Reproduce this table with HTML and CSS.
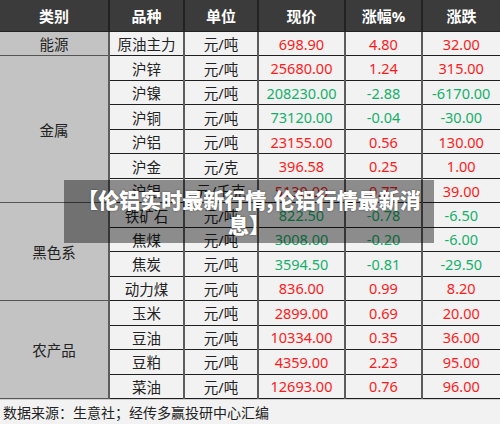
FILE: index.html
```html
<!DOCTYPE html>
<html lang="zh-CN">
<head>
    <meta charset="UTF-8">
    <title>伦铝实时最新行情</title>
    <link rel="stylesheet" href="styles.css">
</head>
<body>
    <div class="sheet">
        <table class="quotes">
            <colgroup>
                <col class="c-cat"><col class="c-name"><col class="c-unit">
                <col class="c-price"><col class="c-pct"><col class="c-chg">
            </colgroup>
            <thead>
                <tr>
                    <th>类别</th>
                    <th>品种</th>
                    <th>单位</th>
                    <th>现价</th>
                    <th>涨幅%</th>
                    <th>涨跌</th>
                </tr>
            </thead>
            <tbody>
                <tr>
                    <td class="cat">能源</td>
                    <td>原油主力</td><td>元/吨</td>
                    <td class="up">698.90</td><td class="up">4.80</td><td class="up">32.00</td>
                </tr>
                <tr>
                    <td class="cat" rowspan="6">金属</td>
                    <td>沪锌</td><td>元/吨</td>
                    <td class="up">25680.00</td><td class="up">1.24</td><td class="up">315.00</td>
                </tr>
                <tr>
                    <td>沪镍</td><td>元/吨</td>
                    <td class="down">208230.00</td><td class="down">-2.88</td><td class="down">-6170.00</td>
                </tr>
                <tr>
                    <td>沪铜</td><td>元/吨</td>
                    <td class="down">73120.00</td><td class="down">-0.04</td><td class="down">-30.00</td>
                </tr>
                <tr>
                    <td>沪铝</td><td>元/吨</td>
                    <td class="up">23155.00</td><td class="up">0.56</td><td class="up">130.00</td>
                </tr>
                <tr>
                    <td>沪金</td><td>元/克</td>
                    <td class="up">396.58</td><td class="up">0.25</td><td class="up">1.00</td>
                </tr>
                <tr>
                    <td>沪银</td><td>元/千克</td>
                    <td class="up">5130.00</td><td class="up">0.77</td><td class="up">39.00</td>
                </tr>
                <tr>
                    <td class="cat" rowspan="4">黑色系</td>
                    <td>铁矿石</td><td>元/吨</td>
                    <td class="down">822.50</td><td class="down">-0.78</td><td class="down">-6.50</td>
                </tr>
                <tr>
                    <td>焦煤</td><td>元/吨</td>
                    <td class="down">3008.00</td><td class="down">-0.20</td><td class="down">-6.00</td>
                </tr>
                <tr>
                    <td>焦炭</td><td>元/吨</td>
                    <td class="down">3594.50</td><td class="down">-0.81</td><td class="down">-29.50</td>
                </tr>
                <tr>
                    <td>动力煤</td><td>元/吨</td>
                    <td class="up">836.00</td><td class="up">0.99</td><td class="up">8.20</td>
                </tr>
                <tr>
                    <td class="cat" rowspan="4">农产品</td>
                    <td>玉米</td><td>元/吨</td>
                    <td class="up">2899.00</td><td class="up">0.69</td><td class="up">20.00</td>
                </tr>
                <tr>
                    <td>豆油</td><td>元/吨</td>
                    <td class="up">10334.00</td><td class="up">0.35</td><td class="up">36.00</td>
                </tr>
                <tr>
                    <td>豆粕</td><td>元/吨</td>
                    <td class="up">4359.00</td><td class="up">2.23</td><td class="up">95.00</td>
                </tr>
                <tr>
                    <td>菜油</td><td>元/吨</td>
                    <td class="up">12693.00</td><td class="up">0.76</td><td class="up">96.00</td>
                </tr>
            </tbody>
        </table>
        <div class="source">数据来源：生意社；经传多赢投研中心汇编</div>

        <!-- title caption laid over the table -->
        <div class="caption">【伦铝实时最新行情,伦铝行情最新消息】</div>
    </div>
</body>
</html>
```

FILE: styles.css
```css
body {
    margin: 0;
    font-family: "Noto Sans", "Noto Sans CJK SC", sans-serif;
    background: #f2f2f2;
}
.sheet {
    position: relative;
    width: 500px;
    height: 424px;
    overflow: hidden;
}
.quotes {
    width: 500px;
    table-layout: fixed;
    border-collapse: collapse;
}
.c-cat { width: 109px; }
.c-name { width: 75px; }
.c-unit { width: 74px; }
.c-price { width: 87px; }
.c-pct { width: 77px; }
.c-chg { width: 78px; }
th {
    height: 31px;
    padding: 0;
    background-color: #3b3b3b;
    color: #fff;
    font-size: 15px;
    font-weight: bold;
    border-left: 2px solid #222;
    border-bottom: 1px solid #222;
}
th:first-child {
    border-left: none;
}
td {
    height: 23.47px;
    padding: 0;
    text-align: center;
    font-size: 14.5px;
    color: #222;
    background-color: #f2f2f2;
    border-left: 2px solid #5c5c5c;
    border-bottom: 1px solid #1f1f1f;
    white-space: nowrap;
    overflow: hidden;
}
td:last-child {
    border-right: 1px solid #5c5c5c;
}
td.cat {
    background-color: #c3c3c3;
    border-left: none;
    border-bottom: 1px solid #555;
}
td.up {
    color: #ff1a1a;
}
td.down {
    color: #14b06a;
}
.source {
    height: 26px;
    line-height: 26px;
    padding-left: 3px;
    font-size: 14px;
    color: #222;
    background-color: #f2f2f2;
    border-top: 1px solid #d0d0d0;
    box-sizing: border-box;
}
.caption {
    position: absolute;
    left: 64px;
    top: 180px;
    width: 370px;
    height: 63px;
    box-sizing: border-box;
    padding: 7px 10px 0;
    background-color: rgba(0, 0, 0, 0.42);
    color: #fff;
    font-family: "Noto Sans CJK SC", sans-serif;
    font-size: 21px;
    font-weight: 900;
    line-height: 25px;
    text-align: center;
    text-shadow: 0 0 2px rgba(0, 0, 0, 0.5);
}
```
